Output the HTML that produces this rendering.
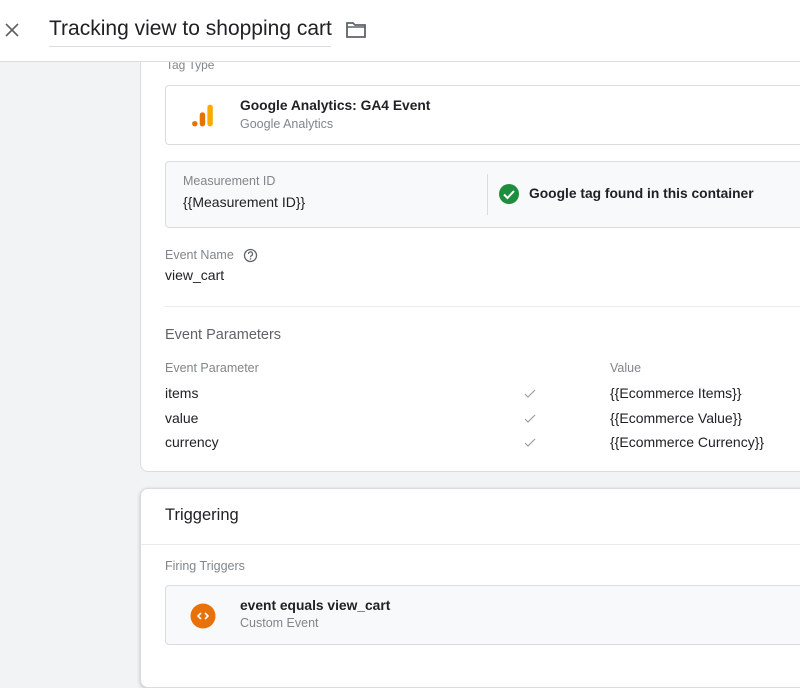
<!DOCTYPE html>
<html><head><meta charset="utf-8"><style>
*{margin:0;padding:0;box-sizing:border-box}
body{width:800px;height:658px;overflow:hidden;background:#f1f3f4;font-family:"Liberation Sans",sans-serif;position:relative;color:#202124}
.hdr{position:absolute;left:0;top:0;width:800px;height:62px;background:#fff;border-bottom:1px solid #dadce0;z-index:5}
.t{position:absolute;font-size:14px;white-space:nowrap}
.card{position:absolute;background:#fff;border:1px solid #dadce0;border-right:none;border-radius:8px 0 0 8px}
.box{position:absolute;background:#f8f9fa;border:1px solid #dadce0;border-right:none;border-radius:4px 0 0 4px}
.g{color:#80868b}
</style></head><body>
<div class="hdr">
  <svg style="position:absolute;left:4px;top:22px" width="16" height="16" viewBox="0 0 16 16"><path d="M2 2L14 14M14 2L2 14" stroke="#5f6368" stroke-width="1.6"/></svg>
  <div class="t" style="left:49px;top:17px;font-size:21px;color:#202124">Tracking view to shopping cart</div>
  <div style="position:absolute;left:49px;top:46px;width:282px;height:1px;background:#dadce0"></div>
  <svg style="position:absolute;left:345px;top:21px" width="22" height="18" viewBox="0 0 22 18"><path d="M2 2h6l2 2h10v12H2z" fill="none" stroke="#5f6368" stroke-width="1.8"/><path d="M2 6h18" stroke="#5f6368" stroke-width="1.5"/></svg>
</div>
<div class="card" style="left:140px;top:20px;width:670px;height:452px"></div>
<div class="t g" style="left:166px;top:58px;font-size:12px">Tag Type</div>
<div class="box" style="left:165px;top:85px;width:640px;height:60px;background:#fff"></div>
<svg style="position:absolute;left:191px;top:103px" width="24" height="25" viewBox="0 0 22 22"><rect x="15" y="1" width="5" height="20" rx="2.5" fill="#f9ab00"/><rect x="8" y="8" width="5" height="13" rx="2.5" fill="#e37400"/><circle cx="3.5" cy="18.5" r="2.5" fill="#e37400"/></svg>
<div class="t" style="left:240px;top:98px;font-weight:bold;font-size:13.8px">Google Analytics: GA4 Event</div>
<div class="t g" style="left:240px;top:117px;font-size:12.5px">Google Analytics</div>
<div class="box" style="left:165px;top:161px;width:640px;height:67px"></div>
<div class="t g" style="left:183px;top:174px;font-size:12.5px">Measurement ID</div>
<div class="t" style="left:183px;top:194px">{{Measurement ID}}</div>
<div style="position:absolute;left:487px;top:174px;width:1px;height:41px;background:#dadce0"></div>
<svg style="position:absolute;left:498px;top:183px" width="22" height="22" viewBox="0 0 22 22"><circle cx="11" cy="11" r="10" fill="#1e8e3e"/><path d="M6 11.5l3.5 3.5 6.5-7" fill="none" stroke="#fff" stroke-width="2"/></svg>
<div class="t" style="left:529px;top:186px;font-weight:bold;font-size:13.8px">Google tag found in this container</div>
<div class="t g" style="left:165px;top:248px;font-size:12.5px">Event Name</div>
<svg style="position:absolute;left:243px;top:248px" width="15" height="15" viewBox="0 0 15 15"><circle cx="7.5" cy="7.5" r="6" fill="none" stroke="#5f6368" stroke-width="1.3"/><path d="M5.5 6a2 2 0 1 1 2.7 1.8c-.6.3-.7.6-.7 1.4" fill="none" stroke="#5f6368" stroke-width="1.2"/><circle cx="7.5" cy="10.9" r=".8" fill="#5f6368"/></svg>
<div class="t" style="left:165px;top:267px">view_cart</div>
<div style="position:absolute;left:165px;top:306px;width:640px;height:1px;background:#e8eaed"></div>
<div class="t" style="left:165px;top:327px;font-size:14.5px;color:#5f6368">Event Parameters</div>
<div class="t g" style="left:165px;top:361px;font-size:12.5px">Event Parameter</div>
<div class="t g" style="left:610px;top:361px;font-size:12.5px">Value</div>
<div class="t" style="left:165px;top:385px">items</div>
<div class="t" style="left:165px;top:410px">value</div>
<div class="t" style="left:165px;top:434px">currency</div>
<div class="t" style="left:610px;top:385px">{{Ecommerce Items}}</div>
<div class="t" style="left:610px;top:410px">{{Ecommerce Value}}</div>
<div class="t" style="left:610px;top:434px">{{Ecommerce Currency}}</div>
<svg style="position:absolute;left:523px;top:386px" width="14" height="80" viewBox="0 0 14 80"><g fill="none" stroke="#9aa0a6" stroke-width="1.2"><path d="M2 8l3 3 7-7"/><path d="M2 33l3 3 7-7"/><path d="M2 57l3 3 7-7"/></g></svg>
<div class="card" style="left:140px;top:488px;width:670px;height:200px;box-shadow:0 1px 3px rgba(60,64,67,.3)"></div>
<div class="t" style="left:165px;top:506px;font-size:16.5px">Triggering</div>
<div style="position:absolute;left:141px;top:544px;width:660px;height:1px;background:#e8eaed"></div>
<div class="t g" style="left:165px;top:559px;font-size:12.5px">Firing Triggers</div>
<div class="box" style="left:165px;top:585px;width:640px;height:60px"></div>
<svg style="position:absolute;left:190px;top:603px" width="26" height="26" viewBox="0 0 26 26"><circle cx="13" cy="13" r="12.5" fill="#e8710a"/><path d="M11 10l-3 3 3 3M15 10l3 3-3 3" fill="none" stroke="#fff" stroke-width="1.6"/></svg>
<div class="t" style="left:240px;top:598px;font-weight:bold;font-size:13.8px">event equals view_cart</div>
<div class="t g" style="left:240px;top:616px;font-size:12.5px">Custom Event</div>
</body></html>
